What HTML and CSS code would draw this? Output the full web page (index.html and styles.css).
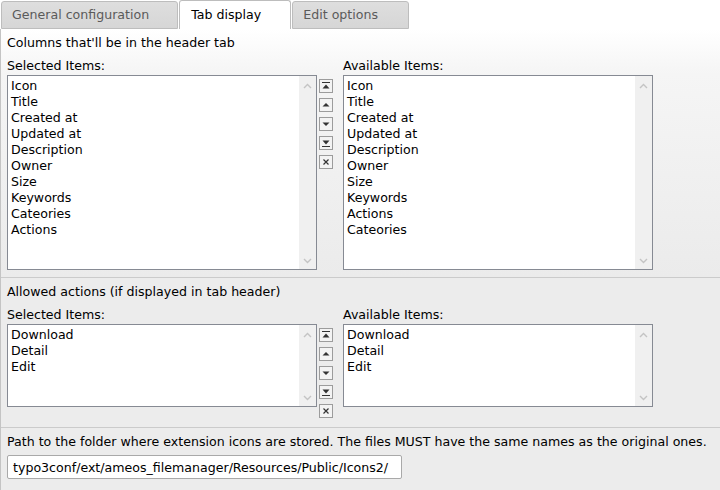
FILE: index.html
```html
<!DOCTYPE html>
<html>
<head>
<meta charset="utf-8">
<link rel="stylesheet" href="styles.css">
</head>
<body>
<div class="tabs">
  <div class="tab first">General configuration</div>
  <div class="tab active">Tab display</div>
  <div class="tab last">Edit options</div>
</div>
<div class="panel">
  <section class="sec sec1">
    <div class="caption">Columns that'll be in the header tab</div>
    <div class="picker">
      <div class="label">Selected Items:</div>
      <div class="spacer"></div>
      <div class="label">Available Items:</div>
      <div class="list tall">
        <div class="items">
          <div>Icon</div><div>Title</div><div>Created at</div><div>Updated at</div><div>Description</div><div>Owner</div><div>Size</div><div>Keywords</div><div>Cateories</div><div>Actions</div>
        </div>
        <div class="sb"><svg class="up" width="9" height="6" viewBox="0 0 9 6"><path d="M1 5 L4.5 1.5 L8 5" fill="none" stroke="#c4c4c4" stroke-width="1.4"/></svg><svg class="down" width="9" height="6" viewBox="0 0 9 6"><path d="M1 1 L4.5 4.5 L8 1" fill="none" stroke="#c4c4c4" stroke-width="1.4"/></svg></div>
      </div>
      <div class="btns">
        <svg width="14" height="14" viewBox="0 0 14 14"><rect x="0.5" y="0.5" width="13" height="13" class="bb"/><rect x="3" y="3" width="8" height="1" fill="#333"/><path d="M3.5 9.5 L10.5 9.5 L7 5.5 Z" fill="#333"/></svg>
        <svg width="14" height="14" viewBox="0 0 14 14"><rect x="0.5" y="0.5" width="13" height="13" class="bb"/><path d="M3.5 8.5 L10.5 8.5 L7 5 Z" fill="#333"/></svg>
        <svg width="14" height="14" viewBox="0 0 14 14"><rect x="0.5" y="0.5" width="13" height="13" class="bb"/><path d="M3.5 5.5 L10.5 5.5 L7 9 Z" fill="#333"/></svg>
        <svg width="14" height="14" viewBox="0 0 14 14"><rect x="0.5" y="0.5" width="13" height="13" class="bb"/><path d="M3.5 4.5 L10.5 4.5 L7 8.5 Z" fill="#333"/><rect x="3" y="10" width="8" height="1" fill="#333"/></svg>
        <svg width="14" height="14" viewBox="0 0 14 14"><rect x="0.5" y="0.5" width="13" height="13" class="bb"/><path d="M4.5 4.5 L9.5 9.5 M9.5 4.5 L4.5 9.5" stroke="#333" stroke-width="1.2"/></svg>
      </div>
      <div class="list tall">
        <div class="items">
          <div>Icon</div><div>Title</div><div>Created at</div><div>Updated at</div><div>Description</div><div>Owner</div><div>Size</div><div>Keywords</div><div>Actions</div><div>Cateories</div>
        </div>
        <div class="sb"><svg class="up" width="9" height="6" viewBox="0 0 9 6"><path d="M1 5 L4.5 1.5 L8 5" fill="none" stroke="#c4c4c4" stroke-width="1.4"/></svg><svg class="down" width="9" height="6" viewBox="0 0 9 6"><path d="M1 1 L4.5 4.5 L8 1" fill="none" stroke="#c4c4c4" stroke-width="1.4"/></svg></div>
      </div>
    </div>
  </section>
  <section class="sec sec2">
    <div class="caption">Allowed actions (if displayed in tab header)</div>
    <div class="picker">
      <div class="label">Selected Items:</div>
      <div class="spacer"></div>
      <div class="label">Available Items:</div>
      <div class="list short">
        <div class="items">
          <div>Download</div><div>Detail</div><div>Edit</div>
        </div>
        <div class="sb"><svg class="up" width="9" height="6" viewBox="0 0 9 6"><path d="M1 5 L4.5 1.5 L8 5" fill="none" stroke="#c4c4c4" stroke-width="1.4"/></svg><svg class="down" width="9" height="6" viewBox="0 0 9 6"><path d="M1 1 L4.5 4.5 L8 1" fill="none" stroke="#c4c4c4" stroke-width="1.4"/></svg></div>
      </div>
      <div class="btns">
        <svg width="14" height="14" viewBox="0 0 14 14"><rect x="0.5" y="0.5" width="13" height="13" class="bb"/><rect x="3" y="3" width="8" height="1" fill="#333"/><path d="M3.5 9.5 L10.5 9.5 L7 5.5 Z" fill="#333"/></svg>
        <svg width="14" height="14" viewBox="0 0 14 14"><rect x="0.5" y="0.5" width="13" height="13" class="bb"/><path d="M3.5 8.5 L10.5 8.5 L7 5 Z" fill="#333"/></svg>
        <svg width="14" height="14" viewBox="0 0 14 14"><rect x="0.5" y="0.5" width="13" height="13" class="bb"/><path d="M3.5 5.5 L10.5 5.5 L7 9 Z" fill="#333"/></svg>
        <svg width="14" height="14" viewBox="0 0 14 14"><rect x="0.5" y="0.5" width="13" height="13" class="bb"/><path d="M3.5 4.5 L10.5 4.5 L7 8.5 Z" fill="#333"/><rect x="3" y="10" width="8" height="1" fill="#333"/></svg>
        <svg width="14" height="14" viewBox="0 0 14 14"><rect x="0.5" y="0.5" width="13" height="13" class="bb"/><path d="M4.5 4.5 L9.5 9.5 M9.5 4.5 L4.5 9.5" stroke="#333" stroke-width="1.2"/></svg>
      </div>
      <div class="list short">
        <div class="items">
          <div>Download</div><div>Detail</div><div>Edit</div>
        </div>
        <div class="sb"><svg class="up" width="9" height="6" viewBox="0 0 9 6"><path d="M1 5 L4.5 1.5 L8 5" fill="none" stroke="#c4c4c4" stroke-width="1.4"/></svg><svg class="down" width="9" height="6" viewBox="0 0 9 6"><path d="M1 1 L4.5 4.5 L8 1" fill="none" stroke="#c4c4c4" stroke-width="1.4"/></svg></div>
      </div>
    </div>
  </section>
  <section class="sec sec3">
    <div class="caption">Path to the folder where extension icons are stored. The files MUST have the same names as the original ones.</div>
    <div class="input">typo3conf/ext/ameos_filemanager/Resources/Public/Icons2/</div>
  </section>
</div>
</body>
</html>
```
FILE: styles.css
```css
* { box-sizing: border-box; }
html, body {
  margin: 0;
  padding: 0;
  background: #ececec;
  font-family: "DejaVu Sans", Verdana, sans-serif;
  font-size: 12.6px;
  color: #000;
}
body { width: 720px; height: 490px; overflow: hidden; }

.tabs {
  display: flex;
  align-items: flex-end;
  height: 29px;
  background: #fff;
  padding-left: 1px;
}
.tab {
  height: 28px;
  line-height: 26px;
  padding: 0 29px 0 10px;
  margin-right: 1px;
  background: linear-gradient(#dedede, #d6d6d6);
  border: 1px solid #bdbdbd;
  border-radius: 3px 3px 0 0;
  color: #5a5a5a;
  white-space: nowrap;
}
.tab.first { padding-right: 28px; }
.tab.last { padding-right: 30px; }
.tab.active {
  height: 29px;
  background: #fff;
  border-bottom: none;
  color: #000;
  line-height: 28px;
  padding-right: 29px;
  padding-left: 11px;
}

.panel {
  border-left: 1px solid #c4c4c4;
}
.sec {
  padding: 5px 6px 0 6px;
  border-bottom: 1px solid #cbcbcb;
}
.sec1 {
  background: linear-gradient(#ffffff 0%, #f5f5f5 18%, #ebebeb 100%);
  padding-bottom: 7px;
}
.sec2 { background: #ececec; padding-bottom: 9px; }
.sec3 { background: #ececec; border-bottom: none; height: 62px; }

.caption {
  line-height: 17px;
  height: 16px;
  white-space: nowrap;
}

.picker {
  display: grid;
  grid-template-columns: 310px 26px 310px;
  margin-top: 7px;
}
.label {
  line-height: 17px;
  height: 18px;
}
.list {
  position: relative;
  background: #fff;
  border: 1px solid #868a93;
  display: flex;
}
.list.tall { height: 195px; }
.list.short { height: 83px; }
.items {
  flex: 1;
  padding: 2px 3px 0;
  line-height: 16px;
}
.sb {
  width: 17px;
  background: #f0f0f0;
  display: flex;
  flex-direction: column;
  justify-content: space-between;
  align-items: center;
  padding: 7px 0 5px;
}
.sb svg { display: block; }

.btns {
  display: flex;
  flex-direction: column;
  gap: 5px;
  padding: 4px 0 0 2px;
}
.btns svg { display: block; }
.bb { fill: #f3f3f3; stroke: #9c9c9c; }

.input {
  margin-top: 6px;
  width: 395px;
  height: 24px;
  background: #fff;
  border: 1px solid #a9a9a9;
  border-radius: 2px;
  padding: 0 5px;
  line-height: 23px;
  white-space: nowrap;
}
```
